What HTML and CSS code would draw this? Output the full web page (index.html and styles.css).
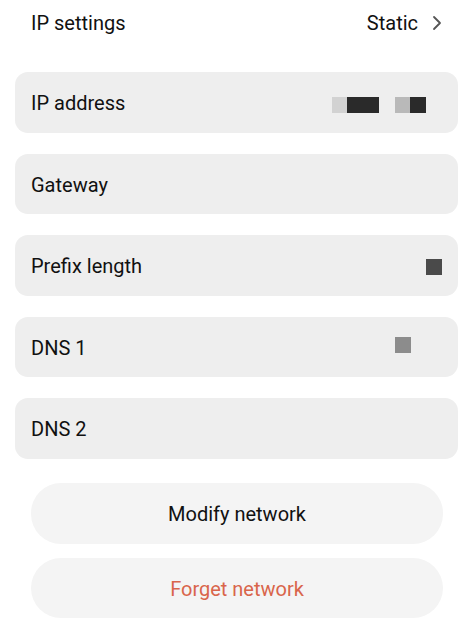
FILE: index.html
```html
<!DOCTYPE html>
<html lang="en">
<head>
    <meta charset="UTF-8">
    <meta name="viewport" content="width=device-width, initial-scale=1.0">
    <title>IP settings</title>
    <link rel="stylesheet" href="styles.css">
</head>
<body>

<div class="page">
    <div class="header">
        <span class="header-title">IP settings</span>
        <span class="header-value">
            Static
            <svg class="chevron" width="10" height="16" viewBox="0 0 10 16">
                <path d="M2 2 L8 8 L2 14" fill="none" stroke="#555" stroke-width="1.8" stroke-linecap="round" stroke-linejoin="round"/>
            </svg>
        </span>
    </div>

    <div class="fields">
        <div class="field">
            <span class="field-label">IP address</span>
            <span class="mask mask-ip">
                <i class="blk light w15"></i><i class="blk dark w32"></i>
                <i class="gap"></i>
                <i class="blk mid w15"></i><i class="blk dark w16"></i>
            </span>
        </div>
        <div class="field">
            <span class="field-label">Gateway</span>
        </div>
        <div class="field">
            <span class="field-label">Prefix length</span>
            <span class="mask mask-prefix"><i class="blk grey4 w16"></i></span>
        </div>
        <div class="field">
            <span class="field-label">DNS 1</span>
            <span class="mask mask-dns"><i class="blk grey8 w16"></i></span>
        </div>
        <div class="field">
            <span class="field-label">DNS 2</span>
        </div>
    </div>

    <div class="actions">
        <button class="pill">Modify network</button>
        <button class="pill danger">Forget network</button>
    </div>
</div>

</body>
</html>
```

FILE: styles.css
```css
body {
    margin: 0;
    padding: 0;
    background-color: #ffffff;
    font-family: Roboto, "Noto Sans", sans-serif;
    color: #111;
}
.page {
    width: 474px;
}
.header {
    display: flex;
    justify-content: space-between;
    align-items: center;
    height: 46px;
    padding: 0 32px 0 31px;
    font-size: 20px;
}
.header-value {
    display: flex;
    align-items: center;
    gap: 14px;
}
.chevron {
    display: block;
}
.fields {
    display: flex;
    flex-direction: column;
    gap: 21px;
    padding: 26px 16px 0 15px;
}
.field {
    display: flex;
    align-items: center;
    justify-content: space-between;
    height: 60.5px;
    padding: 0 16px;
    background-color: #eeeeee;
    border-radius: 13px;
    font-size: 20px;
}
.field-label {
    padding-top: 2px;
}
.mask {
    display: flex;
    height: 16px;
}
.mask-ip {
    margin-right: 16px;
    margin-top: 6px;
}
.mask-prefix {
    margin-right: 0;
    margin-top: 4px;
}
.mask-dns {
    margin-right: 31px;
    margin-top: -4px;
}
.blk {
    display: block;
    height: 16px;
}
.gap { display: block; width: 16px; }
.w15 { width: 15px; }
.w16 { width: 16px; }
.w32 { width: 32px; }
.light { background-color: #d2d2d2; }
.mid { background-color: #b9b9b9; }
.dark { background-color: #2a2a2a; }
.grey4 { background-color: #4a4a4a; }
.grey8 { background-color: #8c8c8c; }
.actions {
    display: flex;
    flex-direction: column;
    gap: 14px;
    padding: 24.5px 31px 0 31px;
}
.pill {
    height: 60.5px;
    padding-top: 3px;
    border: none;
    border-radius: 30px;
    background-color: #f4f4f4;
    font-family: Roboto, "Noto Sans", sans-serif;
    font-size: 20px;
    color: #111;
    cursor: pointer;
}
.pill.danger {
    color: #d9654b;
}
```
